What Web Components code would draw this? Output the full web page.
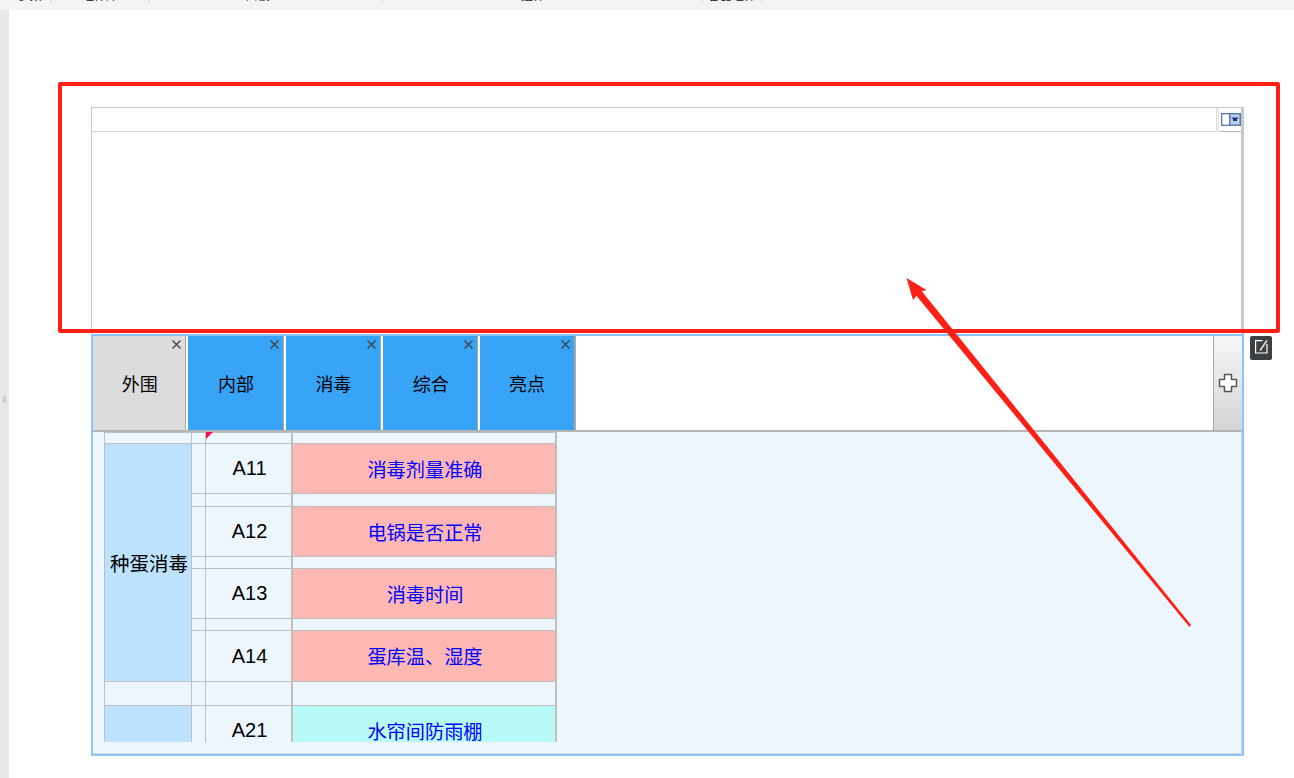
<!DOCTYPE html>
<html lang="zh">
<head>
<meta charset="utf-8">
<title>designer</title>
<style>
  html, body { margin: 0; height: 100%; overflow: hidden; background: #fff; }
  body { font-family: "Liberation Sans", "Noto Sans CJK SC", sans-serif; }
</style>
</head>
<body>
<designer-page>
  <top-strip slot="top"></top-strip>
  <div class="stack">
    <panel-head></panel-head>
    <tab-board>
      <tab-chip active>外围</tab-chip>
      <tab-chip>内部</tab-chip>
      <tab-chip>消毒</tab-chip>
      <tab-chip>综合</tab-chip>
      <tab-chip>亮点</tab-chip>
      <check-sheet slot="sheet"></check-sheet>
    </tab-board>
  </div>
  <mark-up slot="overlay"></mark-up>
</designer-page>

<script>
// page frame: grey strip on the left, toolbar on top, canvas below
class DesignerPage extends HTMLElement {
  constructor() {
    super();
    this.attachShadow({ mode: "open" });
    this.shadowRoot.innerHTML = `
      <style>
        :host { display: block; position: relative; width: 1294px; height: 778px; overflow: hidden; }
        #frame { display: flex; height: 100%; }
        #strip { width: 9px; margin-top: 10px; padding-top: 8px; box-sizing: border-box; background: #e8e8e8; display: flex; align-items: center; justify-content: center; color: #aaa; font-size: 8px; }
        #main { flex: 1; margin-left: -9px; display: flex; flex-direction: column; }
        #canvas { padding: 97px 0 0 91px; }
      </style>
      <div id="frame">
        <div id="strip">||</div>
        <div id="main">
          <slot name="top"></slot>
          <div id="canvas"><slot></slot></div>
        </div>
      </div>
      <slot name="overlay"></slot>`;
  }
}

// toolbar scrolled almost out of the picture, only the feet of its labels show
class TopStrip extends HTMLElement {
  constructor() {
    super();
    this.attachShadow({ mode: "open" });
    const items = [
      ["参数", 52, "padding-left:9px"],
      ["组件库", 98, ""],
      ["面板", 233, "padding-right:16px"],
      ["控件", 320, "padding-right:18px"],
      ["容器组件", 60, ""],
    ];
    this.shadowRoot.innerHTML = `
      <style>
        :host { display: block; height: 10px; background: #f4f4f6; overflow: hidden; }
        #row { display: flex; height: 3px; }
        .item { box-sizing: border-box; height: 3px; border-right: 2px solid #e6e6de; display: flex; justify-content: center; align-items: flex-start; }
        span { font-size: 12px; line-height: 12px; color: #111; margin-top: -10px; white-space: nowrap; }
      </style>
      <div id="row">${items.map(i => `<div class="item" style="width:${i[1]}px;${i[2]}"><span>${i[0]}</span></div>`).join("")}</div>`;
  }
}

// empty upper widget with its little dropdown button
class PanelHead extends HTMLElement {
  constructor() {
    super();
    this.attachShadow({ mode: "open" });
    this.shadowRoot.innerHTML = `
      <style>
        :host { display: block; box-sizing: border-box; width: 1153px; height: 227px; border-left: 1px solid #c8c8c8; border-right: 3px solid #c8c8c8; border-top: 1px solid #c8c8c8; }
        #row { display: flex; height: 24px; }
        #cell { flex: 1; border-bottom: 1px solid #d8d8d8; border-right: 1px solid #d8d8d8; }
        #btn { box-sizing: border-box; width: 23px; margin-left: 1px; border-bottom: 1px solid #bbb; border-left: 1px solid #ddd; display: flex; align-items: center; justify-content: flex-end; }
      </style>
      <div id="row">
        <div id="cell"></div>
        <div id="btn">
          <svg width="20" height="13" viewBox="0 0 20 13">
            <rect x="0.750" y="0.750" width="18.500" height="11.500" fill="#b7d3ee" stroke="#5b7cb0" stroke-width="1.500"/>
            <rect x="1.500" y="1.500" width="7" height="10" fill="#fff"/>
            <line x1="8.750" y1="1" x2="8.750" y2="12" stroke="#5b7cb0" stroke-width="1.500"/>
            <path d="M10 4.500h8l-2 1.500v2h-4v-2z" fill="#1f2f7c"/>
          </svg>
        </div>
      </div>`;
  }
}

class TabBoard extends HTMLElement {
  constructor() {
    super();
    this.attachShadow({ mode: "open" });
    this.shadowRoot.innerHTML = `
      <style>
        :host { display: block; position: relative; box-sizing: border-box; width: 1153px; height: 422px; border: 2px solid #8fc3fb; background: #edf5fd; }
        #inner { height: 100%; display: flex; flex-direction: column; }
        #bar { display: flex; height: 96px; box-sizing: border-box; background: #fff; border-bottom: 2px solid #b4b4b4; }
        #tabs { display: flex; flex: 1; }
        #plus { box-sizing: border-box; width: 29px; border-left: 1px solid #a8a8a8; background: linear-gradient(#f6f6f6, #d4d4d4); display: flex; align-items: center; justify-content: center; }
        #body { flex: 1; border-right: 1px solid #ccd6e0; border-bottom: 1px solid #ccd6e0; }
        #edit { position: absolute; left: 1157px; top: 0; width: 22px; height: 24px; border-radius: 2px; background: #3c4043; display: flex; align-items: center; justify-content: center; }
      </style>
      <div id="inner">
        <div id="bar">
          <div id="tabs"><slot></slot></div>
          <div id="plus">
            <svg width="20" height="20" viewBox="0 0 20 20">
              <path d="M6.500 1.500h7v5h5v7h-5v5h-7v-5h-5v-7h5z" fill="#fff" stroke="#555" stroke-width="1.500" stroke-linejoin="round"/>
            </svg>
          </div>
        </div>
        <div id="body"><slot name="sheet"></slot></div>
      </div>
      <div id="edit">
        <svg width="16" height="16" viewBox="0 0 16 16" fill="none">
          <path d="M9.500 0.600H2.600V13H14V4" stroke="#fff" stroke-width="1.200"/>
          <path d="M7 10.500L14 0.500" stroke="#ddd" stroke-width="1.600"/>
        </svg>
      </div>`;
  }
}

class TabChip extends HTMLElement {
  constructor() {
    super();
    this.attachShadow({ mode: "open" });
    this.shadowRoot.innerHTML = `
      <style>
        :host { display: flex; position: relative; box-sizing: border-box; width: 97.400px; height: 94px; border-right: 2px solid #fff; box-shadow: inset -1px 0 #a9a9a9; background: #38a4f8; align-items: center; justify-content: center; color: #000; font-size: 18px; }
        :host([active]) { background: #dcdcdc; width: 95.300px; }
        :host(:last-of-type) { width: 95.300px; border-right-color: #a9a9a9; box-shadow: none; }
        svg { position: absolute; top: 4px; right: 5px; }
        :host(:last-of-type) svg { right: 3.500px; }
      </style>
      <slot></slot>
      <svg width="9" height="9" viewBox="0 0 9 9"><path d="M0.500 0.500l8 8M8.500 0.500l-8 8" stroke="#444" stroke-width="1.400"/></svg>`;
  }
}

// the check list grid, cut off at the bottom like the original scroller
const ROWS = [
  { code: "A11", item: "消毒剂量准确", tone: "pink" },
  { code: "A12", item: "电锅是否正常", tone: "pink" },
  { code: "A13", item: "消毒时间", tone: "pink" },
  { code: "A14", item: "蛋库温、湿度", tone: "pink" },
];

class CheckSheet extends HTMLElement {
  constructor() {
    super();
    this.attachShadow({ mode: "open" });
    const gap = `<div class="c"></div><div class="c"></div><div class="c end"></div>`;
    let body = "";
    ROWS.forEach((r, i) => {
      if (i > 0) body += gap;
      body += `<div class="c"></div><div class="c code">${r.code}</div><div class="c item ${r.tone} end">${r.item}</div>`;
    });
    this.shadowRoot.innerHTML = `
      <style>
        :host { display: block; height: 310px; overflow: hidden; padding-left: 11px; }
        #grid { position: relative; display: grid; width: 453px; grid-template-columns: 87px 14px 86px 266px; grid-template-rows: 11px 50px 13px 50px 12px 50px 12px 51px 24px 50px; }
        .c { box-sizing: border-box; border-left: 1px solid #bfbfbf; border-top: 1px solid #bfbfbf; display: flex; align-items: center; justify-content: center; font-size: 19.200px; color: #000; }
        .end { border-right: 2px solid #bfbfbf; border-left-width: 2px; }
        .item { color: #00f; padding-left: 2px; }
        .group { grid-column: 1; background: #bde2fd; font-size: 19.500px; padding-left: 2px; }
        .code { font-size: 20px; padding-left: 2px; }
        .pink { background: #feb8b4; }
        .aqua { background: #b6fbf8; }
        #flag { position: absolute; left: 102px; top: 0; width: 7px; height: 7px; background: #f0124c; clip-path: polygon(0 0, 100% 0, 0 100%); }
      </style>
      <div id="grid">
        <div class="c"></div><div class="c"></div><div class="c"></div><div class="c end"></div>
        <div class="c group" style="grid-row: 2 / span 7">种蛋消毒</div>
        ${body}
        <div class="c"></div><div class="c"></div><div class="c"></div><div class="c end"></div>
        <div class="c group"></div><div class="c"></div><div class="c code">A21</div><div class="c item aqua end">水帘间防雨棚</div>
        <div id="flag"></div>
      </div>`;
  }
}

// red hand-drawn notes over the screenshot
class MarkUp extends HTMLElement {
  constructor() {
    super();
    this.attachShadow({ mode: "open" });
    this.shadowRoot.innerHTML = `
      <style>
        :host { position: absolute; inset: 0; display: block; pointer-events: none; }
      </style>
      <svg width="1294" height="778" viewBox="0 0 1294 778">
        <rect x="60" y="84" width="1218" height="247" fill="none" stroke="#ff2015" stroke-width="4" stroke-linejoin="round"/>
        <path d="M906.500 278L926.500 290L921.800 291.300L1050.600 450.800L1191 625L1189.500 627L1046.800 454L916.400 295.700L913 300Z" fill="#ff2015"/>
      </svg>`;
  }
}

customElements.define("designer-page", DesignerPage);
customElements.define("top-strip", TopStrip);
customElements.define("panel-head", PanelHead);
customElements.define("tab-board", TabBoard);
customElements.define("tab-chip", TabChip);
customElements.define("check-sheet", CheckSheet);
customElements.define("mark-up", MarkUp);
</script>
</body>
</html>
